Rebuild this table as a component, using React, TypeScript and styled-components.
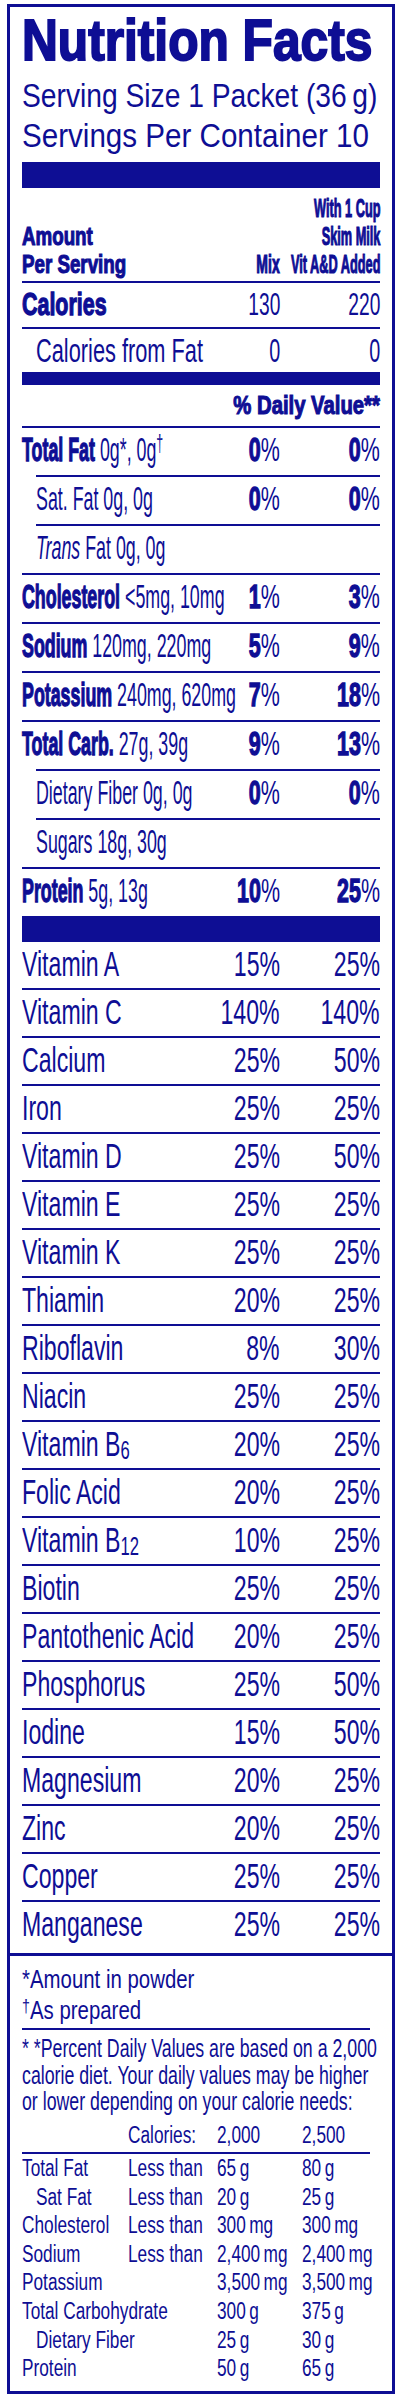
import styled, { createGlobalStyle } from "styled-components"

const INK = "#0e0e94"

const GlobalStyle = createGlobalStyle`
  html, body {
    margin: 0;
    padding: 0;
    background: #fff;
    overflow-x: hidden;
  }
  body {
    font-family: "Liberation Sans", Arial, sans-serif;
    color: ${INK};
  }
`

type Nutrient = {
  lead: string
  rest?: string
  kind?: "bold" | "plain" | "italic"
  dagger?: boolean
  sub?: boolean
  mix?: string
  milk?: string
}

const nutrients: Nutrient[] = [
  { lead: "Total Fat", rest: "0g*, 0g", dagger: true, mix: "0", milk: "0" },
  { lead: "Sat. Fat 0g, 0g", kind: "plain", sub: true, mix: "0", milk: "0" },
  { lead: "Trans", rest: "Fat 0g, 0g", kind: "italic", sub: true },
  { lead: "Cholesterol", rest: "<5mg, 10mg", mix: "1", milk: "3" },
  { lead: "Sodium", rest: "120mg, 220mg", mix: "5", milk: "9" },
  { lead: "Potassium", rest: "240mg, 620mg", mix: "7", milk: "18" },
  { lead: "Total Carb.", rest: "27g, 39g", mix: "9", milk: "13" },
  { lead: "Dietary Fiber 0g, 0g", kind: "plain", sub: true, mix: "0", milk: "0" },
  { lead: "Sugars 18g, 30g", kind: "plain", sub: true },
  { lead: "Protein", rest: "5g, 13g", mix: "10", milk: "25" },
]

type Vitamin = { name: string; idx?: string; mix: string; milk: string }

const vitamins: Vitamin[] = [
  { name: "Vitamin A", mix: "15", milk: "25" },
  { name: "Vitamin C", mix: "140", milk: "140" },
  { name: "Calcium", mix: "25", milk: "50" },
  { name: "Iron", mix: "25", milk: "25" },
  { name: "Vitamin D", mix: "25", milk: "50" },
  { name: "Vitamin E", mix: "25", milk: "25" },
  { name: "Vitamin K", mix: "25", milk: "25" },
  { name: "Thiamin", mix: "20", milk: "25" },
  { name: "Riboflavin", mix: "8", milk: "30" },
  { name: "Niacin", mix: "25", milk: "25" },
  { name: "Vitamin B", idx: "6", mix: "20", milk: "25" },
  { name: "Folic Acid", mix: "20", milk: "25" },
  { name: "Vitamin B", idx: "12", mix: "10", milk: "25" },
  { name: "Biotin", mix: "25", milk: "25" },
  { name: "Pantothenic Acid", mix: "20", milk: "25" },
  { name: "Phosphorus", mix: "25", milk: "50" },
  { name: "Iodine", mix: "15", milk: "50" },
  { name: "Magnesium", mix: "20", milk: "25" },
  { name: "Zinc", mix: "20", milk: "25" },
  { name: "Copper", mix: "25", milk: "25" },
  { name: "Manganese", mix: "25", milk: "25" },
]

const limits = [
  { name: "Total Fat", less: true, a: "65\u2009g", b: "80\u2009g" },
  { name: "Sat Fat", sub: true, less: true, a: "20\u2009g", b: "25\u2009g" },
  { name: "Cholesterol", less: true, a: "300\u2009mg", b: "300\u2009mg" },
  { name: "Sodium", less: true, a: "2,400\u2009mg", b: "2,400\u2009mg" },
  { name: "Potassium", a: "3,500\u2009mg", b: "3,500\u2009mg" },
  { name: "Total Carbohydrate", a: "300\u2009g", b: "375\u2009g" },
  { name: "Dietary Fiber", sub: true, a: "25\u2009g", b: "30\u2009g" },
  { name: "Protein", a: "50\u2009g", b: "65\u2009g" },
]

const App = () => {
  return (
    <>
      <GlobalStyle />
      <Page>
        <Card>
          <Main>
            <Title>
              <Squeeze $x={0.856}>Nutrition Facts</Squeeze>
            </Title>
            <Serving>
              <div>
                <Squeeze $x={0.83}>Serving Size 1 Packet (36{"\u2009"}g)</Squeeze>
              </div>
              <div>
                <Squeeze $x={0.87}>Servings Per Container 10</Squeeze>
              </div>
            </Serving>
            <Bar $h={26} $mt={7} />

            <Header>
              <Label>
                <Squeeze $x={0.75}>
                  Amount
                  <br />
                  Per Serving
                </Squeeze>
              </Label>
              <Cell>
                <Squeeze $x={0.56} $right>
                  Mix
                </Squeeze>
              </Cell>
              <Cell>
                <Squeeze $x={0.51} $right>
                  With 1 Cup
                  <br />
                  Skim Milk
                  <br />
                  Vit A&amp;D Added
                </Squeeze>
              </Cell>
            </Header>

            <Row $h={44} $size={32} $lift={2}>
              <Label>
                <Squeeze $x={0.67}>
                  <Strong>Calories</Strong>
                </Squeeze>
              </Label>
              <Cell>
                <Squeeze $x={0.6} $right>130</Squeeze>
              </Cell>
              <Cell>
                <Squeeze $x={0.6} $right>220</Squeeze>
              </Cell>
            </Row>
            <Row $h={45} $size={33} $rule>
              <Label $pad={14}>
                <Squeeze $x={0.66}>Calories from Fat</Squeeze>
              </Label>
              <Cell>
                <Squeeze $x={0.6} $right>0</Squeeze>
              </Cell>
              <Cell>
                <Squeeze $x={0.6} $right>0</Squeeze>
              </Cell>
            </Row>
            <Bar $h={13} />

            <DailyHead>
              <Squeeze $x={0.78} $right>
                % Daily Value**
              </Squeeze>
            </DailyHead>

            {nutrients.map((n) => (
              <Row key={n.lead} $h={49} $size={33} $lift={3} $rule $indent={n.sub}>
                <Label>
                  <Squeeze $x={0.54}>
                    {n.kind === "plain" ? (
                      n.lead
                    ) : n.kind === "italic" ? (
                      <em>{n.lead}</em>
                    ) : (
                      <Strong>{n.lead}</Strong>
                    )}
                    {n.rest && ` ${n.rest}`}
                    {n.dagger && <Sup>†</Sup>}
                  </Squeeze>
                </Label>
                <Cell>
                  {n.mix && (
                    <Squeeze $x={0.65} $right>
                      <Strong>{n.mix}</Strong>%
                    </Squeeze>
                  )}
                </Cell>
                <Cell>
                  {n.milk && (
                    <Squeeze $x={0.65} $right>
                      <Strong>{n.milk}</Strong>%
                    </Squeeze>
                  )}
                </Cell>
              </Row>
            ))}
            <Bar $h={26} />

            {vitamins.map((v, i) => (
              <Row key={v.name + (v.idx ?? "")} $h={i === 0 ? 46 : 48} $size={35} $lift={2} $rule={i > 0}>
                <Label>
                  <Squeeze $x={0.66}>
                    {v.name}
                    {v.idx && <Sub>{v.idx}</Sub>}
                  </Squeeze>
                </Label>
                <Cell>
                  <Squeeze $x={0.66} $right>{v.mix}%</Squeeze>
                </Cell>
                <Cell>
                  <Squeeze $x={0.66} $right>{v.milk}%</Squeeze>
                </Cell>
              </Row>
            ))}
          </Main>

          <Notes>
            <NoteLine>
              <Squeeze $x={0.8}>*Amount in powder</Squeeze>
            </NoteLine>
            <NoteLine>
              <Squeeze $x={0.8}>
                <Sup>†</Sup>As prepared
              </Squeeze>
            </NoteLine>
            <Rule $mt={2} />
            <Para>
              <Squeeze $x={0.71}>
                * *Percent Daily Values are based on a 2,000
                <br />
                calorie diet. Your daily values may be higher
                <br />
                or lower depending on your calorie needs:
              </Squeeze>
            </Para>
            <Limits $mt={6}>
              <span />
              <span>
                <Squeeze $x={0.75}>Calories:</Squeeze>
              </span>
              <span>
                <Squeeze $x={0.75}>2,000</Squeeze>
              </span>
              <span>
                <Squeeze $x={0.75}>2,500</Squeeze>
              </span>
            </Limits>
            <Rule $mt={3} />
            <Limits>
              {limits.map((l) => [
                <LimitName key={l.name} $sub={l.sub}>
                  <Squeeze $x={0.75}>{l.name}</Squeeze>
                </LimitName>,
                <span key={l.name + "-less"}>{l.less && <Squeeze $x={0.75}>Less than</Squeeze>}</span>,
                <span key={l.name + "-a"}>
                  <Squeeze $x={0.75}>{l.a}</Squeeze>
                </span>,
                <span key={l.name + "-b"}>
                  <Squeeze $x={0.75}>{l.b}</Squeeze>
                </span>,
              ])}
            </Limits>
          </Notes>
        </Card>
      </Page>
    </>
  )
}

// the label face is a narrow grotesque, so Liberation Sans gets squeezed sideways
const Squeeze = styled.span<{ $x: number; $right?: boolean }>`
  display: inline-block;
  white-space: nowrap;
  transform: scaleX(${(p) => p.$x});
  transform-origin: ${(p) => (p.$right ? "right" : "left")} center;
  text-align: ${(p) => (p.$right ? "right" : "left")};
`

const Strong = styled.strong`
  font-weight: 700;
  -webkit-text-stroke: 1.3px currentColor;
`

const Sup = styled.span`
  font-size: 0.7em;
  vertical-align: 0.4em;
  line-height: 0;
`

const Sub = styled.span`
  font-size: 0.72em;
  vertical-align: -0.1em;
  line-height: 0;
`

const Page = styled.div`
  padding: 4px 0 0 7px;
`

const Card = styled.div`
  box-sizing: border-box;
  width: 388px;
  border: 3px solid ${INK};
  overflow: hidden;
`

const Main = styled.section`
  padding: 0 12px 5px;
`

const Title = styled.h1`
  margin: 4px 0 0;
  font-size: 58px;
  line-height: 58px;
  font-weight: 700;
  -webkit-text-stroke: 2px currentColor;
`

const Serving = styled.div`
  margin-top: 6px;
  font-size: 34px;
  line-height: 40px;
`

const Bar = styled.div<{ $h: number; $mt?: number }>`
  height: ${(p) => p.$h}px;
  margin-top: ${(p) => p.$mt ?? 0}px;
  background: ${INK};
`

const Header = styled.div`
  display: grid;
  grid-template-columns: minmax(0, 1fr) 80px 100px;
  align-items: end;
  padding: 6px 0 3px;
  border-bottom: 2px solid ${INK};
  font-size: 25px;
  line-height: 28px;
  font-weight: 700;
  -webkit-text-stroke: 1.1px currentColor;
`

const Row = styled.div<{ $h: number; $size: number; $lift?: number; $rule?: boolean; $indent?: boolean }>`
  box-sizing: border-box;
  display: grid;
  grid-template-columns: minmax(0, 1fr) 80px 100px;
  align-items: center;
  height: ${(p) => p.$h}px;
  margin-left: ${(p) => (p.$indent ? 14 : 0)}px;
  padding-bottom: ${(p) => p.$lift ?? 0}px;
  border-top: ${(p) => (p.$rule ? `2px solid ${INK}` : "none")};
  font-size: ${(p) => p.$size}px;
  line-height: ${(p) => p.$h - (p.$rule ? 2 : 0) - (p.$lift ?? 0)}px;
`

const Label = styled.div<{ $pad?: number }>`
  min-width: 0;
  padding-left: ${(p) => p.$pad ?? 0}px;
`

const Cell = styled.div`
  display: flex;
  justify-content: flex-end;
  min-width: 0;
`

const DailyHead = styled.div`
  display: flex;
  justify-content: flex-end;
  height: 41px;
  font-size: 26px;
  line-height: 41px;
  font-weight: 700;
  -webkit-text-stroke: 1.1px currentColor;
`

const Notes = styled.section`
  border-top: 3px solid ${INK};
  padding: 8px 22px 8px 12px;
`

const NoteLine = styled.div`
  font-size: 25.5px;
  line-height: 31px;
`

const Rule = styled.div<{ $mt: number }>`
  height: 2px;
  margin-top: ${(p) => p.$mt}px;
  background: ${INK};
`

const Para = styled.div`
  margin-top: 5px;
  font-size: 25px;
  line-height: 26.5px;
`

const Limits = styled.div<{ $mt?: number }>`
  display: grid;
  grid-template-columns: 106px 89px 85px minmax(0, 1fr);
  margin-top: ${(p) => p.$mt ?? 0}px;
  font-size: 23px;
  line-height: 28.6px;

  > span {
    min-width: 0;
  }
`

const LimitName = styled.span<{ $sub?: boolean }>`
  padding-left: ${(p) => (p.$sub ? 14 : 0)}px;
`

export default App
